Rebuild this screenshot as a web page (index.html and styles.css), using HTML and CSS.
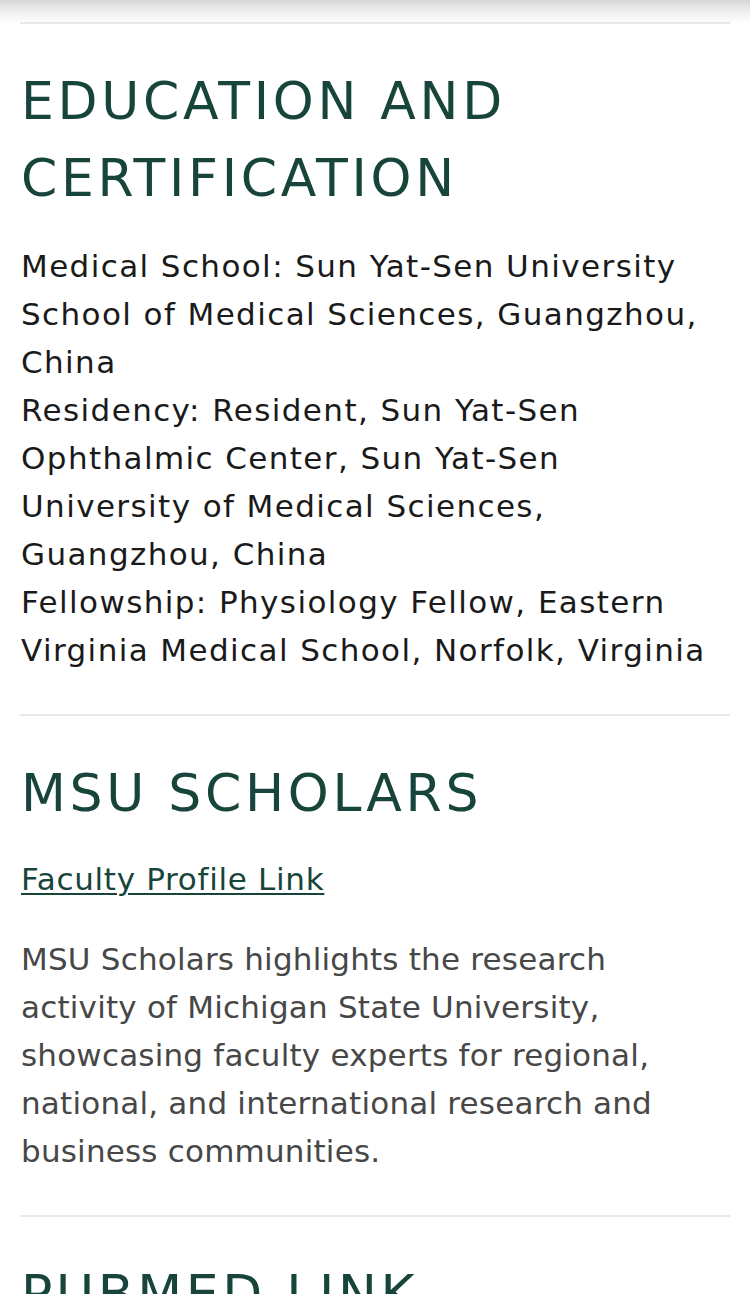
FILE: index.html
```html
<!DOCTYPE html>
<html lang="en">
<head>
<meta charset="utf-8">
<title>Education and Certification</title>
<link rel="stylesheet" href="styles.css">
</head>
<body>
<div class="header-shadow"></div>
<main class="content">
  <section class="block">
    <h2 class="block-title">EDUCATION AND CERTIFICATION</h2>
    <div class="edu">
      <p class="edu-line">Medical School: Sun Yat-Sen University School of Medical Sciences, Guangzhou, China</p>
      <p class="edu-line">Residency: Resident, Sun Yat-Sen Ophthalmic Center, Sun Yat-Sen University of Medical Sciences, Guangzhou, China</p>
      <p class="edu-line">Fellowship: Physiology Fellow, Eastern Virginia Medical School, Norfolk, Virginia</p>
    </div>
  </section>
  <section class="block">
    <h2 class="block-title">MSU SCHOLARS</h2>
    <p class="link-line"><a class="green-link" href="#">Faculty Profile Link</a></p>
    <p class="desc">MSU Scholars highlights the research activity of Michigan State University, showcasing faculty experts for regional, national, and international research and business communities.</p>
  </section>
  <section class="block">
    <h2 class="block-title">PUBMED LINK</h2>
  </section>
</main>
</body>
</html>
```
FILE: styles.css
```css
html, body {
  margin: 0;
  padding: 0;
  background: #ffffff;
}
body {
  font-family: "DejaVu Sans", "Noto Sans", sans-serif;
  color: #1c1c1c;
  overflow: hidden;
}
.header-shadow {
  height: 22px;
  background: linear-gradient(to bottom, #d6d6d6 0%, #ececec 45%, #f7f7f7 80%, #fcfcfc 100%);
}
.content {
  padding: 0 20px;
}
.block {
  border-top: 2px solid #e8e8e8;
  padding: 39px 0 40px 1px;
}
.block-title {
  margin: 0;
  font-size: 52px;
  line-height: 77px;
  font-weight: normal;
  letter-spacing: 3.7px;
  color: #18453b;
}
.edu {
  margin-top: 25px;
}
.edu-line {
  margin: 0;
  font-size: 31px;
  line-height: 48px;
  letter-spacing: 1.4px;
  color: #1a1a1a;
}
.link-line {
  margin: 23px 0 0;
  font-size: 31px;
  line-height: 48px;
  letter-spacing: 0.7px;
}
.green-link {
  color: #18453b;
  text-decoration: underline;
  text-decoration-thickness: 2px;
  text-underline-offset: 3px;
}
.desc {
  margin: 32px 0 0;
  font-size: 31px;
  line-height: 48px;
  letter-spacing: 0.2px;
  color: #474747;
}
```
